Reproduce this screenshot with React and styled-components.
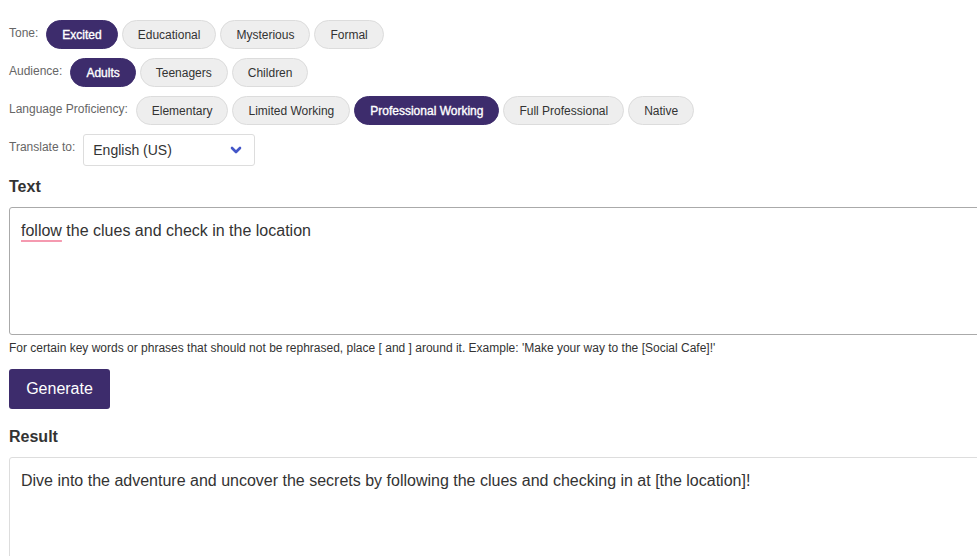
import React from "react";
import styled, { createGlobalStyle } from "styled-components";

const Global = createGlobalStyle`
  html, body { margin: 0; padding: 0; background: #fff; overflow: hidden; }
  body { font-family: "Liberation Sans", Arial, sans-serif; color: #333; }
  * { box-sizing: border-box; }
`;

const Page = styled.div`
  padding: 20px 0 0 9px;
  width: 1200px;
`;

const OptionRow = styled.div`
  display: flex;
  align-items: flex-start;
  margin-bottom: 9px;
`;

const Label = styled.span`
  font-size: 12px;
  line-height: 14px;
  color: #666;
  margin-top: 6px;
  margin-right: 8px;
`;

const Pills = styled.div`
  display: flex;
  gap: 4px;
`;

const Pill = styled.button`
  height: 29px;
  padding: 0 15px;
  border-radius: 15px;
  border: 1px solid ${(p) => (p.$active ? "#3d2c6c" : "#dcdcdc")};
  background: ${(p) => (p.$active ? "#3d2c6c" : "#eeeeee")};
  color: ${(p) => (p.$active ? "#fff" : "#333")};
  font-family: "Liberation Sans", Arial, sans-serif;
  font-size: 12px;
  font-weight: 400;
  -webkit-text-stroke: ${(p) => (p.$active ? "0.35px #fff" : "0")};
  cursor: pointer;
`;

const Select = styled.div`
  width: 172px;
  height: 32px;
  border: 1px solid #dddddd;
  border-radius: 3px;
  display: flex;
  align-items: center;
  justify-content: space-between;
  padding: 0 12px 0 9px;
  font-size: 14px;
  color: #333;
`;

const Heading = styled.div`
  font-size: 16px;
  font-weight: 700;
  line-height: 18px;
  color: #333;
  margin: ${(p) => p.$mt || 0}px 0 11px;
`;

const TextBox = styled.div`
  width: 1100px;
  height: ${(p) => p.$h}px;
  border: 1px solid ${(p) => p.$border};
  border-radius: 3px;
  padding: 14px 11px;
  font-size: 16px;
  line-height: 18px;
  color: #333;
`;

const Misspelled = styled.span`
  text-decoration: underline;
  text-decoration-color: #f59ab0;
  text-decoration-thickness: 2px;
  text-underline-offset: 4px;
`;

const Help = styled.div`
  font-size: 12px;
  line-height: 14px;
  color: #333;
  margin-top: 6px;
`;

const GenerateButton = styled.button`
  margin-top: 14px;
  width: 101px;
  height: 40px;
  border: none;
  border-radius: 3px;
  background: #3d2c6c;
  color: #fff;
  font-family: "Liberation Sans", Arial, sans-serif;
  font-size: 16px;
  cursor: pointer;
`;

const Chevron = () => (
  <svg width="12" height="8" viewBox="0 0 12 8">
    <polyline points="2,2 6,6 10,2" fill="none" stroke="#4356c8" strokeWidth="2.6" strokeLinecap="round" strokeLinejoin="round" />
  </svg>
);

const groups = [
  { label: "Tone:", options: ["Excited", "Educational", "Mysterious", "Formal"], active: "Excited" },
  { label: "Audience:", options: ["Adults", "Teenagers", "Children"], active: "Adults" },
  {
    label: "Language Proficiency:",
    options: ["Elementary", "Limited Working", "Professional Working", "Full Professional", "Native"],
    active: "Professional Working",
  },
];

export default function App() {
  return (
    <>
      <Global />
      <Page>
        {groups.map((g) => (
          <OptionRow key={g.label}>
            <Label>{g.label}</Label>
            <Pills>
              {g.options.map((o) => (
                <Pill key={o} $active={o === g.active}>{o}</Pill>
              ))}
            </Pills>
          </OptionRow>
        ))}
        <OptionRow>
          <Label>Translate to:</Label>
          <Select>
            <span>English (US)</span>
            <Chevron />
          </Select>
        </OptionRow>
        <Heading $mt={12}>Text</Heading>
        <TextBox $h={128} $border="#aaaaaa">
          <Misspelled>follow</Misspelled> the clues and check in the location
        </TextBox>
        <Help>For certain key words or phrases that should not be rephrased, place [ and ] around it. Example: 'Make your way to the [Social Cafe]!'</Help>
        <GenerateButton>Generate</GenerateButton>
        <Heading $mt={19}>Result</Heading>
        <TextBox $h={200} $border="#dddddd">
          Dive into the adventure and uncover the secrets by following the clues and checking in at [the location]!
        </TextBox>
      </Page>
    </>
  );
}
